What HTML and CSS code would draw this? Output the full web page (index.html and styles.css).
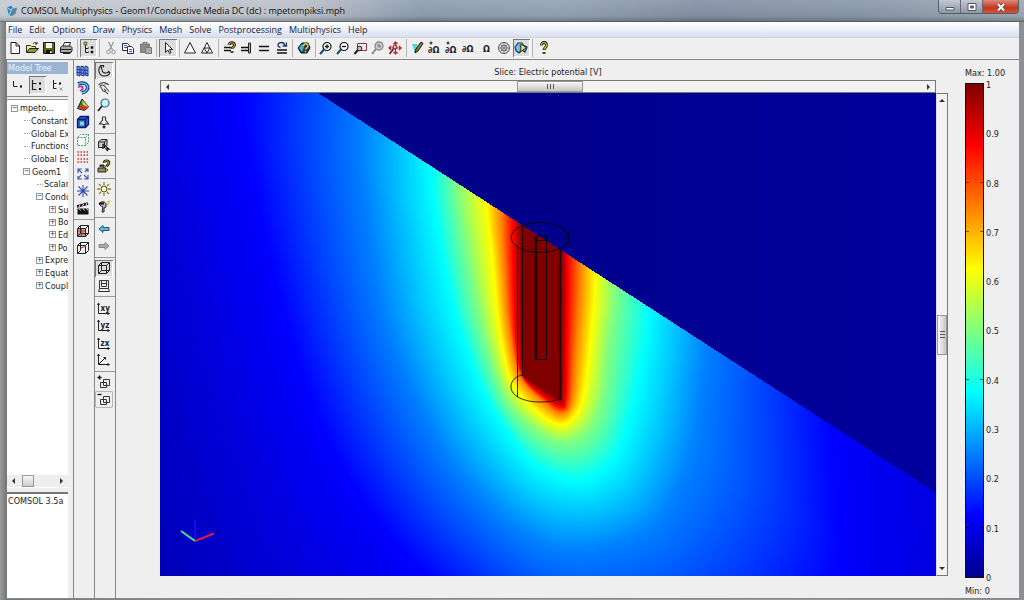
FILE: index.html
```html
<!DOCTYPE html>
<html lang="en">
<head>
<meta charset="utf-8">
<title>COMSOL Multiphysics</title>
<link rel="stylesheet" href="styles.css">
</head>
<body>
<svg class="defs" aria-hidden="true">
  <symbol id="i-new" viewBox="0 0 16 16"><path d="M4 2.500h5l3.500 3.500v7.500h-8.500z" fill="#fff" stroke="#222"/><path d="M9 2.500v3.500h3.500" fill="none" stroke="#222"/></symbol>
  <symbol id="i-open" viewBox="0 0 16 16"><path d="M2.500 12.500v-7h4l1 1h4v2" fill="#f5ef8a" stroke="#333"/><path d="M2.500 12.500l3-4h9l-3.500 4z" fill="#99952a" stroke="#222"/><path d="M9 4c1-2 3-2 4 0m0-2v2h-2" fill="none" stroke="#222"/></symbol>
  <symbol id="i-save" viewBox="0 0 16 16"><path d="M2.500 2.500h11v11h-11z" fill="#5d6410" stroke="#111"/><path d="M5 3h6v5h-6z" fill="#f4f4f4"/><path d="M5 10h6v3.500h-6z" fill="#111"/><path d="M9 11h1.500v2h-1.500z" fill="#fff"/></symbol>
  <symbol id="i-print" viewBox="0 0 16 16"><path d="M5 6.500l1.500-4h6l-1.500 4z" fill="#fff" stroke="#222"/><path d="M2.500 7.500l2-1.500h8l1.500 1.500v3.500l-2 1.500h-9.500z" fill="#aaa" stroke="#222"/><path d="M3 9.500h10M5 13.500h7l1.500-2" fill="none" stroke="#222"/></symbol>
  <symbol id="i-tree" viewBox="0 0 16 16"><path d="M4.500 5v7.500h3M4.500 8.500h3" fill="none" stroke="#222"/><path d="M3 2h3v3h-3z" fill="#b9b42a" stroke="#333" stroke-width=".6"/><path d="M10 6.500h2v2h-2zM10 11h2v2h-2zM7 7.500h1M7 11.500h1" fill="#111" stroke="#111" stroke-width=".5"/></symbol>
  <symbol id="i-cut" viewBox="0 0 16 16"><path d="M5.500 2l4 8M10.500 2l-4 8" fill="none" stroke="#999" stroke-width="1.300"/><circle cx="5.500" cy="12" r="1.800" fill="none" stroke="#999"/><circle cx="10.500" cy="12" r="1.800" fill="none" stroke="#999"/></symbol>
  <symbol id="i-copy" viewBox="0 0 16 16"><path d="M2.500 3.500h5l2 2v5h-7z" fill="#fff" stroke="#28284e"/><path d="M7.500 6.500h4l2 2v5h-6z" fill="#fff" stroke="#28284e"/><path d="M4 5.500h3M4 7.500h3M9 9.500h3M9 11.500h3" stroke="#4b5fae"/></symbol>
  <symbol id="i-paste" viewBox="0 0 16 16"><path d="M2.500 4h9v8.500h-9z" fill="#8b8b8b" stroke="#777"/><path d="M5 2.500h4v2h-4z" fill="#aaa" stroke="#777"/><path d="M7.500 7.500h6v6h-6z" fill="#aaa" stroke="#777"/></symbol>
  <symbol id="i-ptr" viewBox="0 0 16 16"><path d="M5.500 2.500v10l2.500-2.500 1.500 3.500 1.500-.7-1.500-3.300h3z" fill="#fff" stroke="#222"/></symbol>
  <symbol id="i-tri" viewBox="0 0 16 16"><path d="M8 2.500l5.500 10.500h-11z" fill="#fff" stroke="#222"/></symbol>
  <symbol id="i-tri2" viewBox="0 0 16 16"><path d="M8 2.500l5.500 10.500h-11zM5.200 8h5.600l-2.800 5z" fill="#fff" stroke="#222"/></symbol>
  <symbol id="i-eqq" viewBox="0 0 16 16"><path d="M2 7.500h7M2 10.500h7" stroke="#111" stroke-width="1.500"/><path d="M7 5c0-3 5.500-3 5.500 0 0 2-2.500 2-2.500 4M10 11v2" fill="none" stroke="#111" stroke-width="2.800"/><path d="M7 5c0-3 5.500-3 5.500 0 0 2-2.500 2-2.500 4M10 11.200v1.600" fill="none" stroke="#b5ae2c" stroke-width="1.100"/></symbol>
  <symbol id="i-eqb" viewBox="0 0 16 16"><path d="M2 7.500h7M2 10.500h7" stroke="#111" stroke-width="1.500"/><path d="M9.500 3h2v10h-2z" fill="#c4bc35" stroke="#222"/></symbol>
  <symbol id="i-eq" viewBox="0 0 16 16"><path d="M3 6.500h10M3 10.500h10" stroke="#111" stroke-width="1.600"/></symbol>
  <symbol id="i-req" viewBox="0 0 16 16"><path d="M3 10h10M3 13h10" stroke="#111" stroke-width="1.500"/><path d="M6.500 7.500c-4-1-3-5 1-5 2 0 3 1 3.500 3M12.500 2.500v3.500h-4" fill="none" stroke="#233b6e" stroke-width="1.300"/></symbol>
  <symbol id="i-plotq" viewBox="0 0 16 16"><path d="M2 8l4-5h6l2 5-3 5h-6z" fill="#273b6c" stroke="#111"/><path d="M3 8l3-4 2 3-2 5z" fill="#44b9b3"/><path d="M7.500 6c0-3 4.500-3 4.500 0 0 2-2.500 2-2.500 3.500M9.500 11v1.500" fill="none" stroke="#e0cb35" stroke-width="1.500"/></symbol>
  <symbol id="i-zin" viewBox="0 0 16 16"><circle cx="9" cy="6.500" r="4" fill="#f4ffff" stroke="#111" stroke-width="1.200"/><path d="M6 9.500l-4 4.500" stroke="#174d61" stroke-width="2"/><path d="M7 6.500h4M9 4.500v4" stroke="#111" stroke-width="1.300"/></symbol>
  <symbol id="i-zout" viewBox="0 0 16 16"><circle cx="9" cy="6.500" r="4" fill="#f4ffff" stroke="#111" stroke-width="1.200"/><path d="M6 9.500l-4 4.500" stroke="#174d61" stroke-width="2"/><path d="M7 6.500h4" stroke="#111" stroke-width="1.300"/></symbol>
  <symbol id="i-zbox" viewBox="0 0 16 16"><path d="M4.500 3.500h9v7h-9z" fill="#eee" stroke="#8b3440"/><circle cx="6.500" cy="8.500" r="2.300" fill="#bbb" stroke="#222"/><path d="M5 10l-3.500 4" stroke="#222" stroke-width="2"/></symbol>
  <symbol id="i-zgray" viewBox="0 0 16 16"><circle cx="9" cy="6" r="4" fill="#ccc" stroke="#888" stroke-width="1.300"/><path d="M6 9l-4 5" stroke="#888" stroke-width="2"/><path d="M7 6h4M9 4v4M7.500 4.500l3 3" stroke="#888"/></symbol>
  <symbol id="i-zext" viewBox="0 0 16 16"><path d="M8.500 2v12M2 8h12M6.500 4l2-2 2 2M12 6l2 2-2 2M6.500 12l2 2 2-2M4 6l-2 2 2 2" fill="none" stroke="#d81420" stroke-width="1.200"/><circle cx="8" cy="7" r="2" fill="#bcc" stroke="#622"/><path d="M6.500 9l-4 5" stroke="#422" stroke-width="1.500"/></symbol>
  <symbol id="i-draw" viewBox="0 0 16 16"><path d="M2 4l3 9 2-3v-6z" fill="#4bd6dd"/><path d="M5 13l1-4 5-7 2 1.500-5 7.500z" fill="#8e8730" stroke="#111"/></symbol>
  <symbol id="i-pom" viewBox="0 0 16 16"><text x="1" y="13" class="glyph">∂Ω</text><path d="M4 1.500v3M2.500 3h3" stroke="#111"/></symbol>
  <symbol id="i-dom" viewBox="0 0 16 16"><text x="1" y="12" class="glyph">∂Ω</text></symbol>
  <symbol id="i-om" viewBox="0 0 16 16"><text x="4" y="12" class="glyph">Ω</text></symbol>
  <symbol id="i-mesh" viewBox="0 0 16 16"><circle cx="8" cy="8" r="5.500" fill="#ddd" stroke="#555"/><circle cx="8" cy="8" r="2.800" fill="none" stroke="#666"/><path d="M8 2.500v11M2.500 8h11M4 4l8 8M12 4l-8 8" stroke="#777" stroke-width=".7"/></symbol>
  <symbol id="i-post" viewBox="0 0 16 16"><path d="M2 7l3-4h4l1 2 4 2-2 5-3-2-3 3-3-2z" fill="#6ac4dd" stroke="#183568" stroke-width="1.200"/><path d="M7 5h3l3 3-3 2-3 2 1-4z" fill="#e5df58" stroke="#333"/></symbol>
  <symbol id="i-help" viewBox="0 0 16 16"><path d="M5.500 5.500c0-4 5-4 5 0 0 2-2.500 2-2.500 4.500M8 12v2" fill="none" stroke="#111" stroke-width="2.800"/><path d="M5.500 5.500c0-4 5-4 5 0 0 2-2.500 2-2.500 4M8 12.400v1.200" fill="none" stroke="#d5d43c" stroke-width="1.200"/></symbol>

  <symbol id="i-slice" viewBox="0 0 16 16"><path d="M2 3l3 1v9l-3-1zM6 3l3 1v9l-3-1zM10 3l3 1v9l-3-1z" fill="#6aa1dd" stroke="#2034a8"/><path d="M2 6.500l11 1M2 9.500l11 1" stroke="#2034a8"/></symbol>
  <symbol id="i-iso" viewBox="0 0 16 16"><path d="M3 4c11-4 13 7 4 9" fill="none" stroke="#172a92" stroke-width="3.500"/><path d="M3 4c11-4 13 7 4 9" fill="none" stroke="#44d2d0" stroke-width="1.500"/><path d="M3 7c6-2 6 2 2 4" fill="none" stroke="#b832a0" stroke-width="1.800"/></symbol>
  <symbol id="i-cone" viewBox="0 0 16 16"><path d="M7 2l6.500 8-4 3.500-7-2z" fill="#2a8a2a" stroke="#222"/><path d="M7 3l2 10 4-3.500z" fill="#e6dd31"/><path d="M3 11l6 2 4-3-5-2z" fill="#d5332a"/></symbol>
  <symbol id="i-cube" viewBox="0 0 16 16"><path d="M2.500 5.500l3-3h8v8l-3 3h-8z" fill="#2d5fc9" stroke="#101a75" stroke-width="1.300"/><path d="M2.500 5.500h8v8M10.500 5.500l3-3" fill="none" stroke="#101a75" stroke-width="1.300"/><path d="M5 7.500h4v4h-4z" fill="#5adbe0"/><path d="M6 8.500h2v2h-2z" fill="#e9d92a"/></symbol>
  <symbol id="i-dash" viewBox="0 0 16 16"><path d="M2.500 5.500l3-3h8v8l-3 3h-8zM2.500 5.500h8v8M10.500 5.500l3-3" fill="#f4fff9" stroke="#4c9a80" stroke-dasharray="2 1"/></symbol>
  <symbol id="i-dots" viewBox="0 0 16 16"><path d="M2.500 3h11M2.500 6h11M2.500 10h11M2.500 13h11" stroke="#d62f35" stroke-width="1.500" stroke-dasharray="1.500 1.500"/></symbol>
  <symbol id="i-arrows" viewBox="0 0 16 16"><path d="M3 7v-4h4M3 3l4 4M10 3h3v3M13 3l-3 3M3 10v3h4M3 13l3-4M13 9v4h-4M13 13l-4-4" fill="none" stroke="#4857b8" stroke-width="1.200"/></symbol>
  <symbol id="i-star" viewBox="0 0 16 16"><path d="M8 2v12M2 8h12M3.500 3.500l9 9M12.500 3.500l-9 9" stroke="#3346b4" stroke-width="1.100"/></symbol>
  <symbol id="i-film" viewBox="0 0 16 16"><path d="M2.500 7.500h11v6h-11z" fill="#111"/><path d="M2 5.500l11-3" stroke="#111" stroke-width="2.500"/><path d="M4 6l1-2M7.500 5l1-2M11 4l1-2M4 7.500l1.500 2M8 7.500l1.500 2M11.500 7.500l1.500 2" stroke="#eee"/></symbol>
  <symbol id="i-box3" viewBox="0 0 16 16"><path d="M2.500 5.500l3-3h8v8l-3 3h-8zM2.500 5.500h8v8M10.500 5.500l3-3M5.500 2.500v8h8M5.500 10.500l-3 3" fill="none" stroke="#222"/></symbol>
  <symbol id="i-box3r" viewBox="0 0 16 16"><path d="M3 6h7v7h-7z" fill="#d0a0a0"/><path d="M2.500 5.500l3-3h8v8l-3 3h-8zM2.500 5.500h8v8M10.500 5.500l3-3M5.500 2.500v8h8M5.500 10.500l-3 3" fill="none" stroke="#222"/><path d="M3 8h7M3 11h7M6.500 6v7" stroke="#933" stroke-width=".8"/></symbol>
  <symbol id="i-box3p" viewBox="0 0 16 16"><path d="M2.500 5.500l3-3h8v8l-3 3h-8zM2.500 5.500h8v8M10.500 5.500l3-3M5.500 2.500v8M5.500 10.500l-3 3" fill="none" stroke="#222"/><path d="M6 8l5-2" stroke="#b33"/></symbol>

  <symbol id="i-orbit" viewBox="0 0 16 16"><path d="M8 2.500h-3c-4 4-2 10 3 10.500 3 0 5-1 6-3M5 3l1 4c0 3 4 4 7 2M8 2.500l-1 2M14 10l-2-2" fill="none" stroke="#222" stroke-width="1.100"/></symbol>
  <symbol id="i-hand" viewBox="0 0 16 16"><path d="M2.500 5c3-3 7-3 9-1l-3 0M4 7.500c0-3 3-3 5-1l4 5M5 7l2 4 3 1 2 2M8 9l2 2M11.500 4l1.500 1" fill="none" stroke="#555" stroke-width="1.100"/></symbol>
  <symbol id="i-lens" viewBox="0 0 16 16"><circle cx="9" cy="6" r="4" fill="#cdf3fb" stroke="#306f86" stroke-width="1.200"/><path d="M6 9l-4 5" stroke="#222" stroke-width="1.800"/></symbol>
  <symbol id="i-anchor" viewBox="0 0 16 16"><path d="M8 10v4M6.500 12.500l1.500 1.500 1.500-1.500M6.500 3h3M6.500 3v3l-3 4h3l1.500 1 1.500-1h3l-3-4v-3" fill="none" stroke="#333" stroke-width="1.100"/></symbol>
  <symbol id="i-boxptr" viewBox="0 0 16 16"><path d="M2.500 5l2.500-2.500h6v6l-2 2h-6.500zM2.500 5h6v5.500M8.500 5l2.500-2.500" fill="#ccc" stroke="#222"/><path d="M7 7l6 5h-3l2 2M7 7v5" fill="none" stroke="#222" stroke-width="1.300"/></symbol>
  <symbol id="i-camq" viewBox="0 0 16 16"><path d="M2 9h8v4h-8z" fill="#9c914c" stroke="#222"/><path d="M4 8v-2h4v3" fill="#555" stroke="#222"/><path d="M8 4c0-3 5-3 5 0 0 2-2.500 2-2.500 4M10.500 10v2" fill="none" stroke="#111" stroke-width="2.600"/><path d="M8 4c0-3 5-3 5 0 0 2-2.500 2-2.500 4M10.500 10v2" fill="none" stroke="#d9cd35"/></symbol>
  <symbol id="i-sun" viewBox="0 0 16 16"><path d="M8 1v3M8 12v3M1 8h3M12 8h3M3 3l2 2M11 11l2 2M13 3l-2 2M5 11l-2 2" stroke="#8f8525" stroke-width="1.300"/><circle cx="8" cy="8" r="3" fill="#fffba0" stroke="#444"/></symbol>
  <symbol id="i-head" viewBox="0 0 16 16"><path d="M3 5c2-3 6-3 7 0v3l-2 1v4h-2l1-5-2-1z" fill="#bbb" stroke="#222"/><path d="M11 3l3-1-3 5" fill="#f4ed66" stroke="#d0c22a"/><path d="M3 4.500h5" stroke="#111" stroke-width="2"/></symbol>
  <symbol id="i-back" viewBox="0 0 16 16"><path d="M3 8l4-3.500v2h6v3h-6v2z" fill="#5ebada" stroke="#235b76"/></symbol>
  <symbol id="i-fwd" viewBox="0 0 16 16"><path d="M13 8l-4-3.500v2h-6v3h6v2z" fill="#aaa" stroke="#888"/></symbol>
  <symbol id="i-persp" viewBox="0 0 16 16"><path d="M3.500 2.500h9v8h-9zM5.500 5.500h5M3.500 10.500l-1 3h11l-1-3M5.500 2.500v6h5v-6" fill="none" stroke="#333"/></symbol>
  <symbol id="i-xy" viewBox="0 0 16 16"><path d="M2.500 3v10.500h11M2.500 3l-1 2m1-2l1 2M13.500 13.500l-2-1m2 1l-2 1" fill="none" stroke="#222"/><text x="4.500" y="11" class="axis">xy</text></symbol>
  <symbol id="i-yz" viewBox="0 0 16 16"><path d="M2.500 3v10.500h11M2.500 3l-1 2m1-2l1 2M13.500 13.500l-2-1m2 1l-2 1" fill="none" stroke="#222"/><text x="4.500" y="11" class="axis">yz</text></symbol>
  <symbol id="i-zx" viewBox="0 0 16 16"><path d="M2.500 3v10.500h11M2.500 3l-1 2m1-2l1 2M13.500 13.500l-2-1m2 1l-2 1" fill="none" stroke="#222"/><text x="4.500" y="11" class="axis">zx</text></symbol>
  <symbol id="i-ax3" viewBox="0 0 16 16"><path d="M2.500 2v10.500h11M2.500 2l-1 2m1-2l1 2M13.500 12.500l-2-1m2 1l-2 1M2.500 12.500l7-7h-2m2 0v2" fill="none" stroke="#222"/></symbol>
  <symbol id="i-plus" viewBox="0 0 16 16"><path d="M1.500 3.500h4M3.500 1.500v4" stroke="#111" stroke-width="1.300"/><path d="M7.500 5.500h6v6h-6zM4.500 8.500h6v5h-6z" fill="none" stroke="#333"/></symbol>
  <symbol id="i-minus" viewBox="0 0 16 16"><path d="M1.500 3.500h4" stroke="#111" stroke-width="1.300"/><path d="M7.500 5.500h6v6h-6zM4.500 8.500h6v5h-6z" fill="none" stroke="#333"/></symbol>
  <symbol id="i-t1" viewBox="0 0 16 16"><path d="M4.500 4v5.500h4" fill="none" stroke="#222"/><path d="M11 8.500h2v2h-2z"/></symbol>
  <symbol id="i-t2" viewBox="0 0 16 16"><path d="M3.500 3v9.500h4M3.500 6.500h4" fill="none" stroke="#222" stroke-width="1.200"/><path d="M10 5.500h2v2h-2zM10 11h2v2h-2z"/></symbol>
  <symbol id="i-t3" viewBox="0 0 16 16"><path d="M3.500 3v8.500h3M3.500 6.500h3" fill="none" stroke="#222"/><path d="M9 5.500h2v2h-2z"/><path d="M9.500 10.500l3 3m0-3l-3 3" stroke="#999"/></symbol>
</svg>

<div class="window">
  <header class="titlebar">
    <svg class="app-icon" viewBox="0 0 16 16"><path d="M2 4l5-2 2 2v9l-4 1z" fill="#2f83bb"/><path d="M2 4l5 3 2-3M7 7l-2 7" fill="none" stroke="#bfe4f7"/><path d="M9 5l5-1-2 7-3 2z" fill="#6c7f8d"/></svg>
    <h1>COMSOL Multiphysics - Geom1/Conductive Media DC (dc) : mpetompiksi.mph</h1>
    <div class="win-buttons">
      <button class="wb" aria-label="Minimize"><svg viewBox="0 0 20 12"><path d="M6 6.500h8v2.500h-8z" fill="#fff" stroke="#556"/></svg></button>
      <button class="wb" aria-label="Maximize"><svg viewBox="0 0 20 12"><path d="M6 2.500h8v7h-8z" fill="#fff" stroke="#556"/><path d="M8.500 5h3v2h-3z" fill="#778" stroke="#556"/></svg></button>
      <button class="wb close" aria-label="Close"><svg viewBox="0 0 20 12"><path d="M7 3l6 6.500M13 3l-6 6.500" stroke="#544" stroke-width="3.500"/><path d="M7 3l6 6.500M13 3l-6 6.500" stroke="#fff" stroke-width="2"/></svg></button>
    </div>
  </header>

  <div class="client">
    <nav class="menubar">
      <button>File</button><button>Edit</button><button>Options</button><button>Draw</button><button>Physics</button><button>Mesh</button><button>Solve</button><button>Postprocessing</button><button>Multiphysics</button><button>Help</button>
    </nav>

    <div class="toolbar-row"><div class="toolbar" data-icons="new open save print | tree* | cut copy paste | ptr* | tri tri2 | eqq eqb eq req | plotq | zin zout zbox zgray zext | draw pom pom dom om mesh post* | help"></div></div>

    <main class="workspace">
      <aside class="model">
        <h2>Model Tree</h2>
        <div class="tree-tools">
          <button aria-label="Overview"><svg class="ic"><use href="#i-t1"/></svg></button>
          <button class="pressed" aria-label="Inspect"><svg class="ic"><use href="#i-t2"/></svg></button>
          <button aria-label="Detail"><svg class="ic"><use href="#i-t3"/></svg></button>
        </div>
        <div class="tree-pane">
          <ul class="tree">
            <li class="l0"><i class="box">−</i>mpeto...</li>
            <li class="l1 leaf">Constants</li>
            <li class="l1 leaf">Global Expressions</li>
            <li class="l1 leaf">Functions</li>
            <li class="l1 leaf">Global Equations</li>
            <li class="l1"><i class="box">−</i>Geom1</li>
            <li class="l2 leaf">Scalar</li>
            <li class="l2"><i class="box">−</i>Conductive</li>
            <li class="l3"><i class="box">+</i>Su</li>
            <li class="l3"><i class="box">+</i>Bo</li>
            <li class="l3"><i class="box">+</i>Ed</li>
            <li class="l3"><i class="box">+</i>Po</li>
            <li class="l2"><i class="box">+</i>Expre</li>
            <li class="l2"><i class="box">+</i>Equat</li>
            <li class="l2"><i class="box">+</i>Coupl</li>
          </ul>
          <div class="tree-scroll"><i class="arr left"></i><i class="thumb"></i><i class="arr right"></i></div>
        </div>
        <div class="log">COMSOL 3.5a</div>
      </aside>

      <div class="vbar"><div class="vtools plot" data-icons="slice iso cone cube dash dots arrows star film | box3r box3p"></div></div>
      <div class="vbar"><div class="vtools camera" data-icons="orbit* hand lens anchor | boxptr | camq | sun head | back fwd | box3* persp | xy yz zx ax3 | plus minus^"></div></div>

      <section class="plot-area">
        <div class="figure">
          <h3>Slice: Electric potential [V]</h3>
          <div class="hscroll"><i class="arr left"></i><i class="grip"></i><i class="arr right"></i></div>
          <div class="scene">
            <canvas id="field" width="776" height="483"></canvas>
            <svg class="wire" viewBox="160 93 776 483" preserveAspectRatio="none">
              <g fill="none" stroke="#000" stroke-opacity=".8">
                <ellipse cx="540" cy="237.500" rx="29" ry="15"/>
                <path d="M569 228v18M566 228v18" stroke-opacity=".5"/>
                <path d="M517.500 245v152M522.500 225v150M546.500 236v124M535 359.500h12M536 240.500h11M538 236h8"/>
                <path d="M560.500 250v150" stroke-width="1.500"/>
                <path d="M536 236v123" stroke-width="2.500"/>
                <path d="M523 375c-8 1-12 6-12 12 0 9 13 15 29 15 8 0 15-1 21-3"/>
              </g>
              <path d="M195 540v-22" stroke="#1212ff" stroke-width="1.500"/>
              <path d="M195 541l-14-10" stroke="#43e883" stroke-width="2"/>
              <path d="M195 541l19-7.500" stroke="#d81a48" stroke-width="2"/>
              <g class="axis-name"><text x="193" y="520">z</text><text x="175" y="532">y</text><text x="216" y="534">x</text></g>
            </svg>
          </div>
          <div class="vscroll"><i class="arr up"></i><i class="grip"></i><i class="arr down"></i></div>
        </div>
        <div class="legend">
          <p>Max: 1.00</p>
          <div class="scale">
            <div class="bar"></div>
            <ol><li>1</li><li>0.9</li><li>0.8</li><li>0.7</li><li>0.6</li><li>0.5</li><li>0.4</li><li>0.3</li><li>0.2</li><li>0.1</li><li>0</li></ol>
          </div>
          <p>Min: 0</p>
        </div>
      </section>
    </main>
  </div>
</div>
<script src="app.js"></script>
</body>
</html>
```

FILE: styles.css
```css
* { box-sizing: border-box; }
html, body { height: 100%; }
body { margin: 0; overflow: hidden; font-family: "DejaVu Sans Condensed", "DejaVu Sans", sans-serif; font-size: 9px; color: #222; }
h1, h2, h3, p, ul, ol { margin: 0; padding: 0; font-weight: normal; list-style: none; }
h1, h2, h3 { font-size: 9px; }
button { border: 0; padding: 0; background: none; font: inherit; color: inherit; }
i { font-style: normal; }
.defs { position: absolute; width: 0; height: 0; }

.window { height: 100vh; display: flex; flex-direction: column; padding: 0 5px 1px 6px; background: linear-gradient(90deg, #9a9b9d, #77797b 6px, #a5a6a8 50%, #8e8f92); }
.titlebar { flex: none; height: 22px; margin: 0 -5px 0 -6px; padding: 0 5px 0 5px; display: flex; align-items: center; gap: 2px; background: linear-gradient(180deg, #ffffff22 0, #ffffff00 16px, #00000033 21px, #444 22px), linear-gradient(90deg, #c3c9cf 0, #b8bec6 300px, #8998ab 420px, #8f9dae 560px, #7f8ca0 700px, #8593a6 860px, #9aa3ad 100%); }
.app-icon { width: 14px; height: 14px; }
h1 { flex: 1; font-family: "Open Sans", sans-serif; line-height: 20px; color: #111; }
.win-buttons { display: flex; align-self: flex-start; height: 14px; border: 1px solid #555e6b; border-top: 0; border-radius: 0 0 4px 4px; overflow: hidden; }
.wb { width: 22px; background: linear-gradient(#c2c9d2, #8d97a5); border-right: 1px solid #667; display: grid; }
.wb svg { width: 20px; height: 12px; margin: auto; }
.wb.close { width: 35px; border: 0; background: linear-gradient(#dc8a7c, #c3351c 60%, #d2573a); }

.client { flex: 1; min-height: 0; display: flex; flex-direction: column; background: #efefef; border-bottom: 1px solid #888; }
.menubar { flex: none; height: 16px; padding-left: 2px; display: flex; gap: 7px; background: linear-gradient(#fff, #f1f4fb 40%, #d9dff0); font-family: "Open Sans", sans-serif; color: #223; border-bottom: 1px solid #cfd3dd; }
.toolbar-row { flex: none; height: 22px; border-bottom: 1px solid #888; }
.toolbar { width: 546px; height: 20px; display: flex; align-items: center; }
.toolbar button { flex: 1; height: 18px; }
.ic { width: 16px; height: 16px; display: block; margin: auto; flex: none; }
.pressed { background: #dcdcdc; box-shadow: inset 1px 1px #777, inset -1px -1px #fff; }
.outlined { box-shadow: inset 0 0 0 1px #b5b5b5; border-radius: 2px; }
.toolbar .sep { flex: none; width: 1px; height: 18px; margin: 0 2px; background: #b4b4b4; }
.glyph { font: bold 9px "DejaVu Sans Condensed", "DejaVu Sans", sans-serif; fill: #222; }
.axis { font: bold 8px "DejaVu Sans Condensed", "DejaVu Sans", sans-serif; fill: #222; }

.workspace { flex: 1; min-height: 0; display: flex; }
.model { width: 67px; padding: 2px 5px 0 1px; display: flex; flex-direction: column; background: linear-gradient(90deg, #777 0 1px, #efefef 1px); }
.model h2 { height: 12px; padding-left: 1px; line-height: 12px; color: #eef4fb; background: #9ab5d3; white-space: nowrap; }
.tree-tools { height: 23px; display: flex; align-items: center; justify-content: space-around; border-bottom: 1px solid #888; }
.tree-tools button { width: 17px; height: 18px; }
.tree-pane { flex: 1; min-height: 0; margin-top: 2px; display: flex; flex-direction: column; justify-content: space-between; background: #fff; border-top: 1px solid #999; overflow: hidden; }
.tree { height: 192px; padding-top: 2px; display: grid; grid-auto-rows: 1fr; align-items: center; white-space: nowrap; }
.tree li { display: flex; align-items: center; }
.box { width: 7px; height: 7px; margin-right: 2px; border: 1px solid #8b97a6; line-height: 5px; font-size: 7px; text-align: center; background: #fff; flex: none; }
.leaf::before { content: ""; width: 6px; margin-right: 1px; border-top: 1px dotted #aaa; margin-left: 1px; }
.l0 { padding-left: 4px; }
.l1 { padding-left: 16px; }
.l2 { padding-left: 29px; }
.l3 { padding-left: 42px; }
.tree-scroll { height: 12px; margin-bottom: 1px; display: flex; align-items: center; background: #eee; }
.tree-scroll .thumb { width: 12px; height: 12px; margin: 0 auto 0 7px; border: 1px solid #999; background: linear-gradient(#f8f8f8, #ccc); }
.log { flex: none; height: 106px; margin-top: 4px; padding: 1px 0 0 1px; background: #fff; border-top: 2px solid #777; white-space: nowrap; overflow: hidden; line-height: 12px; }
.arr { width: 0; height: 0; border: 3px solid transparent; flex: none; }
.arr.left { border-right-color: #333; border-left-width: 0; margin-left: 5px; }
.arr.right { border-left-color: #333; border-right-width: 0; margin-right: 5px; }
.arr.up { border-bottom-color: #333; border-top-width: 0; margin-top: 5px; }
.arr.down { border-top-color: #333; border-bottom-width: 0; margin-bottom: 5px; }

.vbar { width: 21px; border-left: 1px solid #888; padding: 2px 0; }
.vtools { display: flex; flex-direction: column; }
.vtools.plot { height: 195px; }
.vtools.camera { height: 346px; }
.vtools button { flex: 1; min-height: 0; width: 18px; display: grid; }
.vtools .sep { flex: none; height: 1px; margin: 2px 0; background: #999; }

.plot-area { flex: 1; min-width: 0; display: flex; border-left: 1px solid #888; padding: 6px 12px 0 44px; gap: 17px; }
.figure { flex: 1; min-width: 0; margin-bottom: 22px; display: grid; grid-template: 14px 13px minmax(0, 1fr) / minmax(0, 1fr) 12px; }
.figure h3 { text-align: center; line-height: 12px; }
.hscroll { grid-area: 2 / 1; display: flex; align-items: center; background: #f2f2f0; border: 1px solid #777; }
.hscroll .grip { width: 66px; height: 11px; margin: 0 auto 0 45%; border: 1px solid #999; background: repeating-linear-gradient(90deg, #555 0 1px, transparent 1px 3px) center / 7px 5px no-repeat, linear-gradient(#f8f8f8, #c5c5c5); }
.scene { grid-area: 3 / 1; display: grid; min-height: 0; }
.scene > * { grid-area: 1 / 1; width: 100%; height: 100%; min-height: 0; display: block; }
.axis-name { font-size: 7px; fill: #000060; }
.vscroll { grid-area: 3 / 2; display: flex; flex-direction: column; align-items: center; background: #f2f2f0; border: 1px solid #777; border-left-color: #ddd; }
.vscroll .grip { width: 10px; height: 40px; margin: auto 0; border: 1px solid #999; background: repeating-linear-gradient(#555 0 1px, transparent 1px 3px) center / 5px 7px no-repeat, linear-gradient(90deg, #f8f8f8, #c5c5c5); }
.legend { width: 42px; display: flex; flex-direction: column; }
.legend p { line-height: 14px; white-space: nowrap; }
.scale { flex: 1; min-height: 0; padding: 3px 0 6px; display: flex; gap: 2px; }
.bar { width: 19px; border: 1px solid #111; background: repeating-linear-gradient(transparent 0 9.9%, #0008 9.9% 10%) left / 3px 100% no-repeat, repeating-linear-gradient(transparent 0 9.9%, #0008 9.9% 10%) right / 3px 100% no-repeat, linear-gradient(#800000, #f00 12.5%, #ff0 37.5%, #0ff 62.5%, #00f 87.5%, #00008f); }
.scale ol { display: flex; flex-direction: column; justify-content: space-between; margin: -4px 0 -6px; }
.scale li { line-height: 12px; }
```

FILE: app.js
```js
// Fill the icon bars: "|" is a separator, "*" a pressed button, "^" an outlined one.
document.querySelectorAll('[data-icons]').forEach(bar => {
  bar.innerHTML = bar.dataset.icons.split(' ').map(name => {
    if (name === '|') return '<span class="sep"></span>';
    const id = name.replace(/[*^]/, '');
    const cls = name.endsWith('*') ? 'pressed' : name.endsWith('^') ? 'outlined' : '';
    return `<button class="${cls}" aria-label="${id}"><svg class="ic"><use href="#i-${id}"/></svg></button>`;
  }).join('');
});

// Equipotential curves of the slice, from the electrode outwards.
const CX = 541, CY = 320, N = 1440;
const levels = [
  [1, [[522,190],[522,376],[561,400],[561,190]], true],
  [.875, [[513,225],[514,300],[517,350],[524,378],[543,396],[561,407],[566,398],[567,340],[568,265],[565,190],[541,165],[515,190]]],
  [.75, [[502,218],[504,260],[508,318],[516,366],[526,385],[545,403],[560,413],[571,403],[575,357],[580,273],[576,190],[541,150],[504,180]]],
  [.625, [[487,208],[492,252],[498,318],[507,368],[516,389],[533,408],[552,422],[566,423],[580,407],[587,373],[592,323],[595,273],[590,190],[541,130],[490,160]]],
  [.5, [[457,188],[465,235],[477,302],[492,362],[508,402],[538,432],[565,442],[588,430],[602,400],[609,340],[615,285],[605,180],[541,100],[460,140]]],
  [.375, [[432,168],[436,218],[452,302],[462,335],[485,395],[522,452],[548,472],[582,480],[612,460],[628,423],[640,373],[648,307],[640,170],[541,60],[440,110]]],
  [.25, [[362,128],[368,218],[385,318],[418,402],[455,468],[510,525],[570,551],[645,533],[678,490],[695,440],[703,380],[706,340],[690,150],[541,20],[390,50]]],
  [.125, [[244,93],[255,185],[285,318],[312,402],[342,468],[395,542],[450,595],[540,660],[660,680],[780,645],[835,573],[837,507],[832,440],[822,360],[780,100],[600,-60],[400,-60],[270,20]]],
  [.09, [[150,105],[182,218],[212,352],[245,452],[300,568],[450,700],[700,770],[870,710],[945,590],[945,493],[925,400],[880,100],[650,-120],[350,-120],[200,0]]],
  [.045, [[0,100],[50,250],[90,420],[125,575],[210,720],[500,880],[850,850],[1060,720],[1080,500],[1000,200],[700,-200],[300,-200],[80,-50]]],
  [0, [[-200,100],[-150,400],[-100,700],[200,900],[700,1000],[1200,900],[1250,400],[1100,0],[700,-400],[200,-400],[-100,-150]]]
];

function smooth(p) {
  const out = [], n = p.length;
  for (let i = 0; i < n; i++) {
    const [a, b, c, d] = [p[(i + n - 1) % n], p[i], p[(i + 1) % n], p[(i + 2) % n]];
    for (let k = 0; k < 12; k++) {
      const t = k / 12;
      out.push([0, 1].map(j => .5 * (2 * b[j] + (c[j] - a[j]) * t + (2 * a[j] - 5 * b[j] + 4 * c[j] - d[j]) * t * t + (3 * b[j] - a[j] - 3 * c[j] + d[j]) * t * t * t)));
    }
  }
  return out;
}

function radii(poly) {
  const r = new Float64Array(N + 1);
  for (let s = 0; s <= N; s++) {
    const th = s / N * 2 * Math.PI, dx = Math.cos(th), dy = Math.sin(th);
    for (let i = 0; i < poly.length; i++) {
      const [x1, y1] = poly[i], [x2, y2] = poly[(i + 1) % poly.length];
      const ex = x2 - x1, ey = y2 - y1, det = dx * ey - dy * ex;
      if (Math.abs(det) < 1e-9) continue;
      const wx = x1 - CX, wy = y1 - CY;
      const t = (wx * ey - wy * ex) / det, u = (wx * dy - wy * dx) / det;
      if (t > 0 && u >= -1e-6 && u <= 1.000001) r[s] = Math.max(r[s], t);
    }
  }
  return r;
}

const rings = levels.map(([v, pts, sharp]) => [v, radii(sharp ? pts : smooth(pts))]);
const clamp = v => Math.max(0, Math.min(1, v));
const jet = v => [1.5 - Math.abs(4 * v - 3), 1.5 - Math.abs(4 * v - 2), 1.5 - Math.abs(4 * v - 1)].map(c => 255 * clamp(c));

const canvas = document.getElementById('field');
const ctx = canvas.getContext('2d');
const img = ctx.createImageData(canvas.width, canvas.height);
for (let j = 0; j < canvas.height; j++) {
  for (let i = 0; i < canvas.width; i++) {
    const x = 160.5 + i, y = 93.5 + j;
    let rgb;
    if (y < 93 + (x - 318) * .647) {
      rgb = [0, 0, 136 + 22 * clamp((x - 480) / 456)];
    } else {
      const r = Math.hypot(x - CX, y - CY);
      const a = (Math.atan2(y - CY, x - CX) / (2 * Math.PI) + 1) % 1 * N;
      const k = Math.floor(a), f = a - k;
      const at = q => rings[q][1][k] * (1 - f) + rings[q][1][k + 1] * f;
      let v = 0, inner = at(0);
      if (r <= inner) v = 1;
      else for (let q = 1; q < rings.length; q++) {
        const outer = at(q);
        if (r <= outer) {
          v = rings[q - 1][0] + (rings[q][0] - rings[q - 1][0]) * (r - inner) / Math.max(outer - inner, .01);
          break;
        }
        inner = outer;
      }
      rgb = jet(v);
    }
    img.data.set([rgb[0], rgb[1], rgb[2], 255], (j * canvas.width + i) * 4);
  }
}
ctx.putImageData(img, 0, 0);
```
